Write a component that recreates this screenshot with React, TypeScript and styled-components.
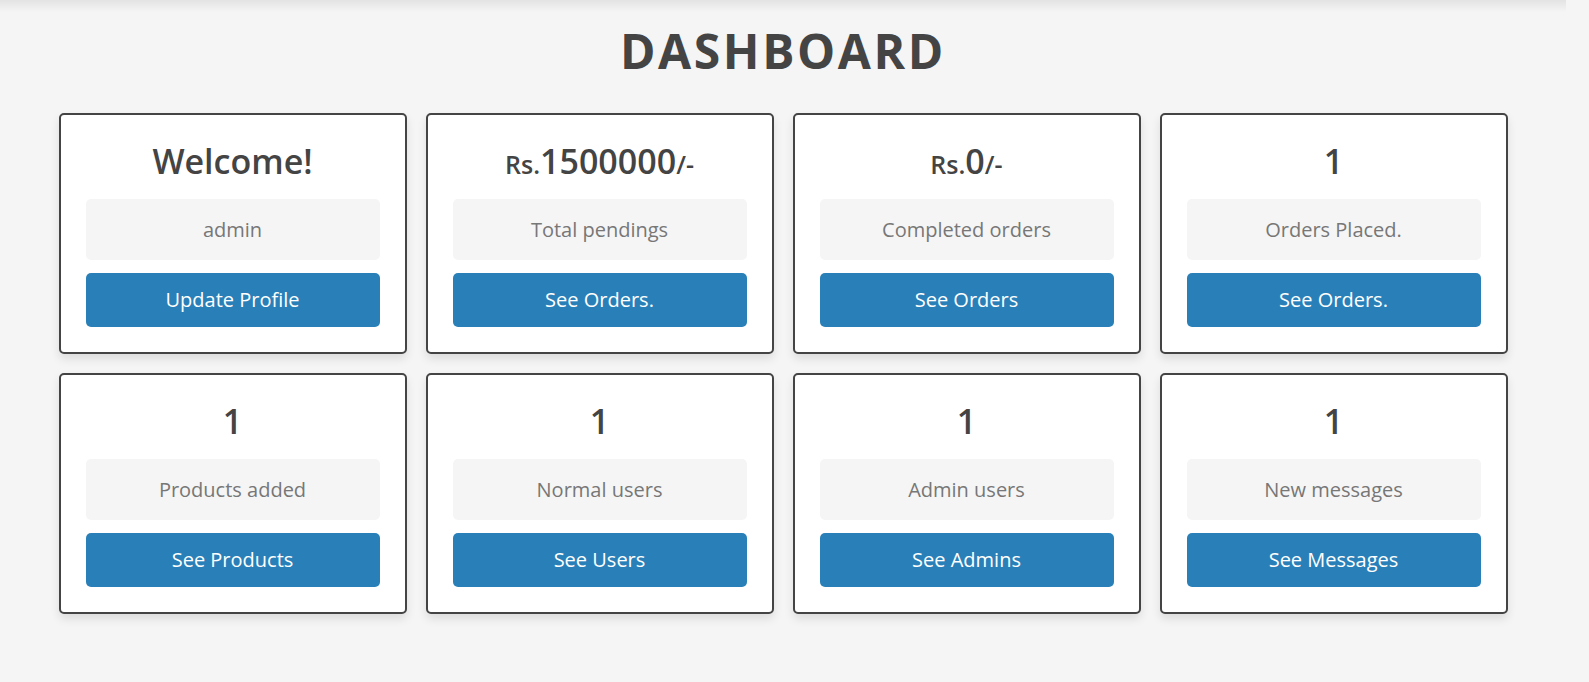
import React from "react";
import styled, { createGlobalStyle } from "styled-components";

const GlobalStyle = createGlobalStyle`
  * { box-sizing: border-box; margin: 0; padding: 0; }
  html, body { background: #f5f5f5; }
  body {
    font-family: "Open Sans", "Noto Sans", Arial, sans-serif;
    color: #444;
  }
`;

const Page = styled.main`
  min-height: 682px;
  padding-right: 23px;
`;

const TopShade = styled.div`
  height: 12px;
  background: linear-gradient(to bottom, rgba(0, 0, 0, 0.075), rgba(0, 0, 0, 0));
`;

const Title = styled.h1`
  margin-top: 10px;
  text-align: center;
  font-size: 48px;
  line-height: 58px;
  font-weight: 700;
  letter-spacing: 2.6px;
  text-transform: uppercase;
  color: #444;
`;

const Grid = styled.section`
  margin-top: 33px;
  display: grid;
  grid-template-columns: repeat(4, 348px);
  gap: 19px;
  justify-content: center;
  align-items: start;
`;

const Card = styled.div`
  background: #fff;
  border: 2px solid #444;
  border-radius: 5px;
  box-shadow: 0 5px 10px rgba(0, 0, 0, 0.1);
  padding: 25px;
  text-align: center;
`;

const Heading = styled.h3`
  font-size: 34px;
  line-height: 42px;
  height: 42px;
  font-weight: 600;
  color: #444;
`;

const Unit = styled.span`
  font-size: 25px;
  line-height: 1;
  font-weight: 600;
`;

const Label = styled.p`
  margin: 17px 0 13px;
  padding: 15.5px;
  border-radius: 5px;
  background: #f5f5f5;
  font-size: 20px;
  line-height: 30px;
  color: #777;
`;

const Action = styled.a`
  display: block;
  padding: 12px;
  border-radius: 5px;
  background: #2980b9;
  color: #fff;
  font-size: 20px;
  line-height: 30px;
  text-decoration: none;
  cursor: pointer;
`;

type Item = {
  value: React.ReactNode;
  label: string;
  action: string;
};

const money = (n: string) => (
  <>
    <Unit>Rs.</Unit>
    {n}
    <Unit>/-</Unit>
  </>
);

const items: Item[] = [
  { value: "Welcome!", label: "admin", action: "Update Profile" },
  { value: money("1500000"), label: "Total pendings", action: "See Orders." },
  { value: money("0"), label: "Completed orders", action: "See Orders" },
  { value: "1", label: "Orders Placed.", action: "See Orders." },
  { value: "1", label: "Products added", action: "See Products" },
  { value: "1", label: "Normal users", action: "See Users" },
  { value: "1", label: "Admin users", action: "See Admins" },
  { value: "1", label: "New messages", action: "See Messages" },
];

export default function App() {
  return (
    <>
      <GlobalStyle />
      <Page>
        <TopShade />
        <Title>Dashboard</Title>
        <Grid>
          {items.map((it, i) => (
            <Card key={i}>
              <Heading>{it.value}</Heading>
              <Label>{it.label}</Label>
              <Action>{it.action}</Action>
            </Card>
          ))}
        </Grid>
      </Page>
    </>
  );
}
